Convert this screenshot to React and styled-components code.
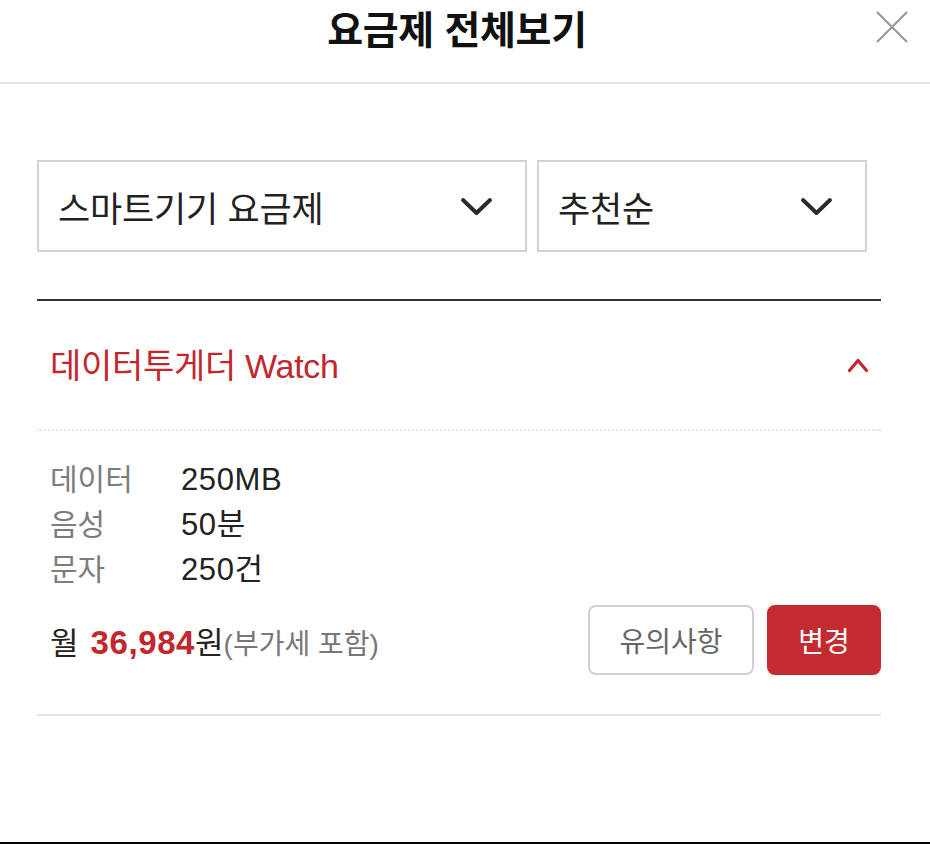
import React from "react";
import styled, { createGlobalStyle } from "styled-components";

const Global = createGlobalStyle`
  html, body { margin: 0; padding: 0; background: #fff; }
  body { font-family: "Liberation Sans", "Noto Sans CJK KR", sans-serif; color: #222; }
  * { box-sizing: border-box; }
`;

const Page = styled.div`
  width: 930px;
  height: 844px;
  border-bottom: 2px solid #000;
  display: flex;
  flex-direction: column;
`;

const Header = styled.header`
  height: 84px;
  border-bottom: 2px solid #e4e4e4;
  display: grid;
  grid-template-columns: 1fr auto 1fr;
  align-items: center;
  padding: 0 22px 0 0;
`;

const Title = styled.h1`
  grid-column: 2;
  margin: 0;
  font-size: 39px;
  font-weight: 700;
  color: #111;
  letter-spacing: -0.3px;
  line-height: 1;
  transform: translate(3px, -11px);
`;

const CloseButton = styled.button`
  grid-column: 3;
  justify-self: end;
  align-self: start;
  margin-top: 11px;
  width: 32px;
  height: 32px;
  padding: 0;
  border: 0;
  background: none;
  display: flex;
  align-items: center;
  justify-content: center;
`;

const Content = styled.main`
  padding: 76px 49px 0 37px;
`;

const Filters = styled.div`
  display: flex;
  gap: 10px;
`;

const Select = styled.div`
  width: ${(p) => p.$w}px;
  height: 92px;
  border: 2px solid #d2d2d2;
  display: flex;
  align-items: center;
  justify-content: space-between;
  padding: 0 32px 0 19px;
  font-size: 35px;
  color: #222;
  letter-spacing: -0.2px;
`;

const StrongRule = styled.hr`
  margin: 47px 0 0;
  border: 0;
  border-top: 2px solid #333;
`;

const PlanHead = styled.div`
  height: 130px;
  display: flex;
  align-items: center;
  justify-content: space-between;
  padding: 0 12px 0 13px;
  border-bottom: 2px dotted #e3e3e3;
`;

const PlanName = styled.span`
  font-size: 34px;
  color: #c1272d;
  letter-spacing: -0.3px;
  transform: translateY(-2px);
`;

const Specs = styled.dl`
  margin: 26px 0 0;
  padding: 0 0 0 13px;
  display: grid;
  grid-template-columns: 131px 1fr;
  font-size: 30px;
  line-height: 45px;
`;

const Label = styled.dt`
  color: #7d7d7d;
`;

const Value = styled.dd`
  margin: 0;
  color: #222;
  font-size: 31px;
  letter-spacing: 0.6px;
`;

const PriceRow = styled.div`
  display: flex;
  align-items: center;
  justify-content: space-between;
  padding: 13px 0 39px 13px;
  border-bottom: 2px solid #e6e6e6;
`;

const Price = styled.div`
  font-size: 31px;
  color: #222;
`;

const Amount = styled.strong`
  color: #c1272d;
  font-weight: 700;
  font-size: 33px;
  letter-spacing: 0.6px;
  margin-left: 12px;
`;

const Vat = styled.span`
  color: #777;
  font-size: 28px;
`;

const Buttons = styled.div`
  display: flex;
  gap: 13px;
`;

const Btn = styled.button`
  height: 70px;
  width: ${(p) => p.$w}px;
  border-radius: 8px;
  font-family: inherit;
  font-size: 28px;
  border: 2px solid ${(p) => (p.$primary ? "#c32b31" : "#d0d0d0")};
  background: ${(p) => (p.$primary ? "#c32b31" : "#fff")};
  color: ${(p) => (p.$primary ? "#fff" : "#666")};
  padding: 0;
`;

const Chevron = ({ up, color, w, h, sw }) => (
  <svg width={w} height={h} viewBox={`0 0 ${w} ${h}`} fill="none">
    <polyline
      points={
        up
          ? `${sw} ${h - sw} ${w / 2} ${sw} ${w - sw} ${h - sw}`
          : `${sw} ${sw} ${w / 2} ${h - sw} ${w - sw} ${sw}`
      }
      stroke={color}
      strokeWidth={sw * 1.3}
      strokeLinecap="round"
      strokeLinejoin="round"
    />
  </svg>
);

export default function App() {
  return (
    <>
      <Global />
      <Page>
        <Header>
          <Title>요금제 전체보기</Title>
          <CloseButton aria-label="닫기">
            <svg width="32" height="32" viewBox="0 0 32 32">
              <path d="M1 1 L31 31 M31 1 L1 31" stroke="#9a9a9a" strokeWidth="2.2" />
            </svg>
          </CloseButton>
        </Header>
        <Content>
          <Filters>
            <Select $w={490}>
              스마트기기 요금제
              <Chevron color="#2a2a2a" w={33} h={19} sw={3} />
            </Select>
            <Select $w={330}>
              추천순
              <Chevron color="#2a2a2a" w={33} h={19} sw={3} />
            </Select>
          </Filters>
          <StrongRule />
          <PlanHead>
            <PlanName>데이터투게더 Watch</PlanName>
            <Chevron up color="#c1272d" w={22} h={15} sw={2.5} />
          </PlanHead>
          <Specs>
            <Label>데이터</Label>
            <Value>250MB</Value>
            <Label>음성</Label>
            <Value>50분</Value>
            <Label>문자</Label>
            <Value>250건</Value>
          </Specs>
          <PriceRow>
            <Price>
              월<Amount>36,984</Amount>원<Vat>(부가세 포함)</Vat>
            </Price>
            <Buttons>
              <Btn $w={166}>유의사항</Btn>
              <Btn $primary $w={114}>변경</Btn>
            </Buttons>
          </PriceRow>
        </Content>
      </Page>
    </>
  );
}
